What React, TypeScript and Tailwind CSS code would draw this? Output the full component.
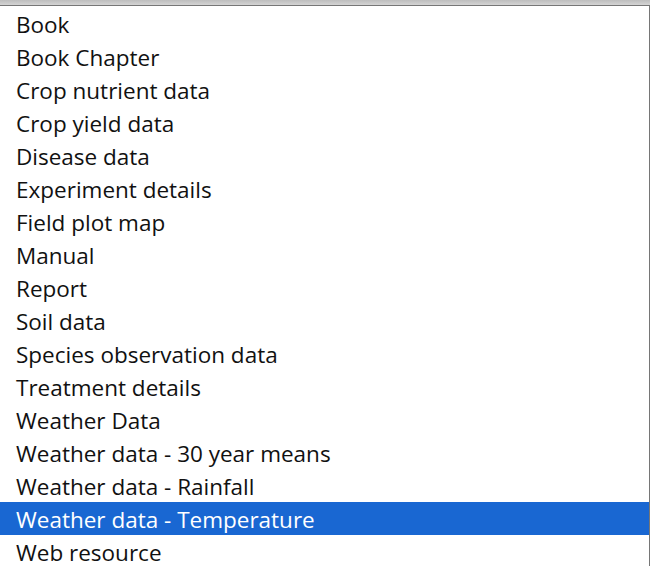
const options = [
  "Book",
  "Book Chapter",
  "Crop nutrient data",
  "Crop yield data",
  "Disease data",
  "Experiment details",
  "Field plot map",
  "Manual",
  "Report",
  "Soil data",
  "Species observation data",
  "Treatment details",
  "Weather Data",
  "Weather data - 30 year means",
  "Weather data - Rainfall",
  "Weather data - Temperature",
  "Web resource",
]

const selected = "Weather data - Temperature"

export default function App() {
  return (
    <div className="w-[650px] h-[566px] overflow-hidden bg-white">
      <div className="h-[5px] bg-gradient-to-b from-[#bdbdbd] to-[#d4d4d4]" />
      <ul
        className="border-t border-r border-[#767676] pt-px"
        style={{ fontFamily: '"Open Sans", "Noto Sans", sans-serif' }}
      >
        {options.map((opt) => (
          <li
            key={opt}
            className={
              opt === selected
                ? "h-[33px] flex items-center pl-4 pt-1 text-[22.5px] leading-none bg-[#1967d2] text-white"
                : "h-[33px] flex items-center pl-4 pt-1 text-[22.5px] leading-none text-[#111]"
            }
          >
            {opt}
          </li>
        ))}
      </ul>
    </div>
  )
}
